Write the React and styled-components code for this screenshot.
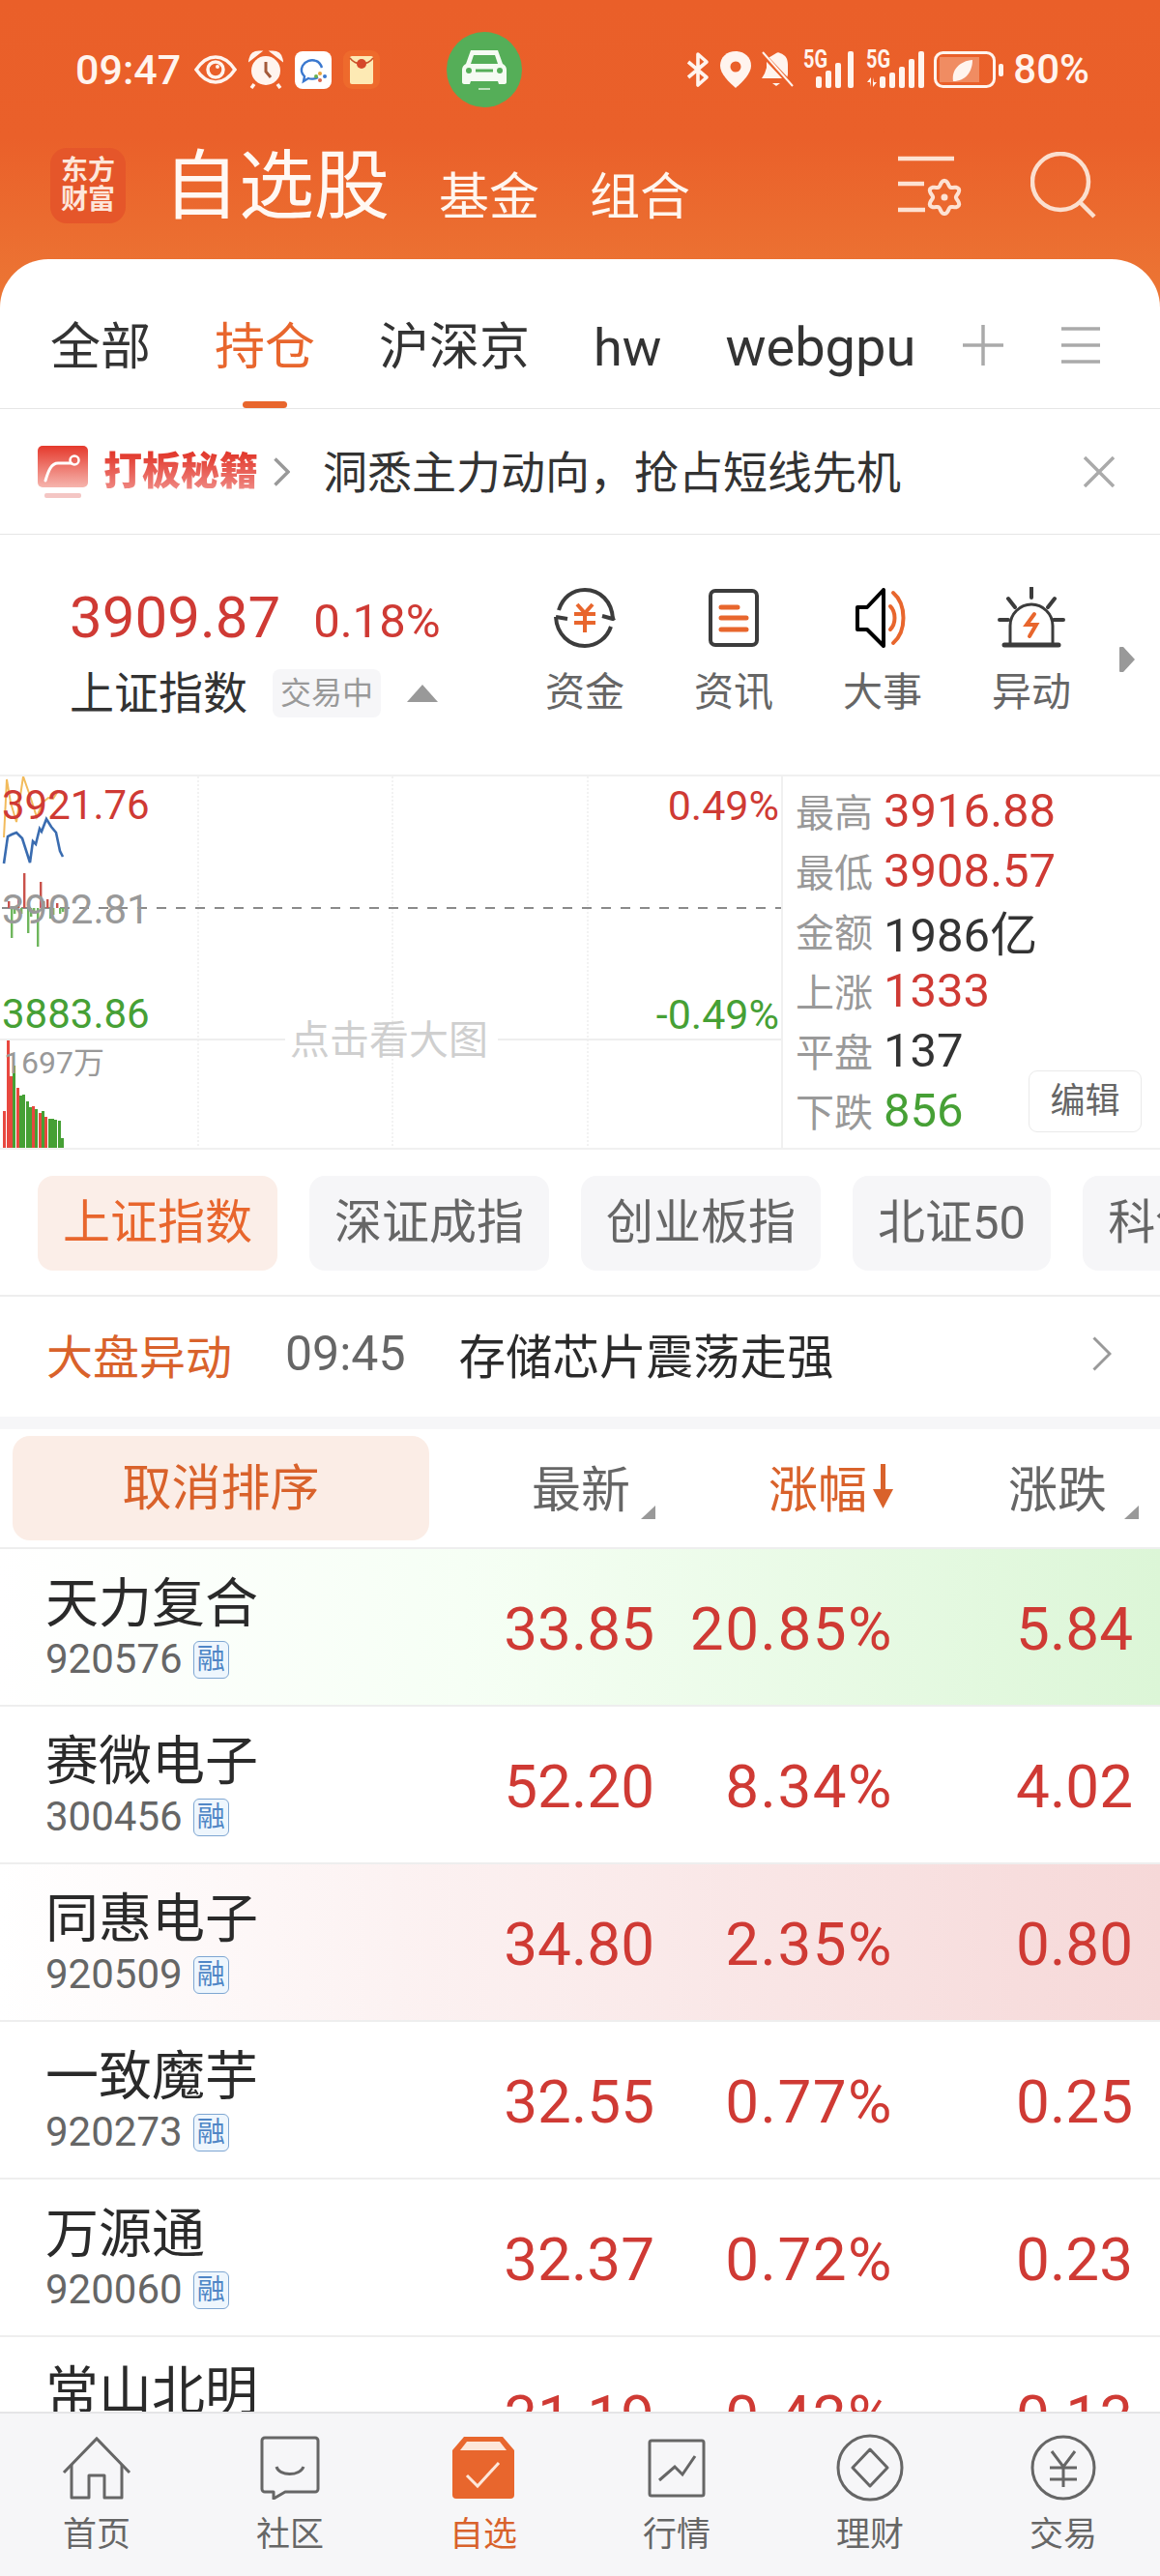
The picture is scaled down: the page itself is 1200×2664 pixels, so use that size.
import React from 'react'
import styled, { createGlobalStyle } from 'styled-components'

const ORANGE = '#E8662D'
const RED = '#CF3A34'
const GREEN = '#46A035'
const FONT = '"Roboto", "Noto Sans CJK SC", sans-serif'

const GlobalStyle = createGlobalStyle`
  html, body { margin: 0; padding: 0; background: #fff; }
  body { font-family: ${FONT}; }
  * { box-sizing: border-box; }
`

const Page = styled.div`
  width: 1200px;
  height: 2664px;
  display: flex;
  flex-direction: column;
  overflow: hidden;
  background: #fff;
`

/* header */
const Header = styled.header`
  flex: none;
  height: 318px;
  padding-top: 32px;
  background: linear-gradient(180deg, #ea5f29 0%, #ea602a 45%, #ec7735 100%);
  color: #fff;
`
const StatusBar = styled.div`
  height: 80px;
  display: flex;
  align-items: center;
  padding: 0 73px 0 78px;
`
const StatusLeft = styled.div`
  width: 384px;
  display: flex;
  align-items: center;
  gap: 12px;
`
const Time = styled.span`
  font-size: 43px;
  font-weight: 500;
  line-height: 1;
  margin-right: 2px;
  color: #fff4ee;
`
const CarBadge = styled.div`
  width: 78px;
  height: 78px;
  border-radius: 50%;
  background: #55ae58;
  display: flex;
  align-items: center;
  justify-content: center;
  margin-right: auto;
`
const StatusRight = styled.div`
  display: flex;
  align-items: center;
  gap: 10px;
`
const Battery = styled.span`
  font-size: 42px;
  font-weight: 500;
  line-height: 1;
  color: #fff4ee;
`
const TitleRow = styled.div`
  height: 80px;
  margin-top: 40px;
  padding: 0 64px 0 52px;
  display: flex;
  align-items: center;
`
const Logo = styled.div`
  width: 78px;
  height: 78px;
  border-radius: 17px;
  background: #e5562a;
  color: #fde6da;
  font-size: 28px;
  font-weight: 700;
  line-height: 30px;
  text-align: center;
  padding-top: 9px;
`
const Title = styled.h1`
  margin: 0 0 0 39px;
  padding-top: 3px;
  font-size: 78px;
  font-weight: 400;
  line-height: 1;
  letter-spacing: 0;
  color: #fff8f3;
`
const SubTitle = styled.span`
  font-size: 52px;
  line-height: 1;
  margin-left: ${(p) => p.$gap}px;
  padding-top: 26px;
  color: #fff6ef;
`
const HeaderIcons = styled.div`
  margin-left: auto;
  display: flex;
  align-items: center;
  gap: 68px;
`

/* white sheet */
const Sheet = styled.div`
  flex: 1;
  min-height: 0;
  margin-top: -50px;
  background: #fff;
  border-radius: 50px 50px 0 0;
  display: flex;
  flex-direction: column;
`
const TabsBar = styled.div`
  flex: none;
  height: 155px;
  display: flex;
  align-items: center;
  border-bottom: 1px solid #e6e6e6;
  padding-left: 52px;
`
const TabsScroll = styled.div`
  width: 896px;
  display: flex;
  gap: 66px;
  overflow: hidden;
`
const Tab = styled.div`
  position: relative;
  flex: none;
  height: 155px;
  line-height: 183px;
  font-size: ${(p) => p.$size || 52}px;
  color: ${(p) => (p.$active ? ORANGE : '#333')};
  ${(p) =>
    p.$active &&
    `&::after {
      content: '';
      position: absolute;
      left: 29px;
      bottom: 1px;
      width: 46px;
      height: 7px;
      border-radius: 4px;
      background: ${ORANGE};
    }`}
`
const TabTools = styled.div`
  display: flex;
  align-items: center;
  gap: 60px;
  margin-left: 48px;
  padding-top: 24px;
`
const Banner = styled.div`
  flex: none;
  height: 130px;
  display: flex;
  align-items: center;
  padding-left: 39px;
  border-bottom: 1px solid #e6e6e6;
`
const BannerName = styled.span`
  margin-left: 16px;
  font-size: 40px;
  font-weight: 900;
  line-height: 46px;
  background: linear-gradient(180deg, #e23a2e 10%, #f08d88 95%);
  -webkit-background-clip: text;
  background-clip: text;
  color: transparent;
`
const BannerChevron = styled.span`
  display: flex;
  margin-left: 16px;
`
const BannerText = styled.span`
  margin: 0 0 6px 34px;
  font-size: 46px;
  color: #333;
`
const CloseButton = styled.span`
  margin-left: auto;
  margin-right: 47px;
  display: flex;
`

/* index summary */
const IndexRow = styled.section`
  flex: none;
  height: 248px;
  display: flex;
  padding-top: 54px;
`
const IndexInfo = styled.div`
  flex: none;
  width: 528px;
  padding: 0 0 0 72px;
`
const PriceLine = styled.div`
  display: flex;
  align-items: baseline;
  gap: 34px;
  color: ${RED};
  height: 62px;
  line-height: 64px;
`
const Price = styled.span`
  font-size: 60px;
`
const Percent = styled.span`
  font-size: 49px;
`
const NameLine = styled.div`
  display: flex;
  align-items: center;
  margin-top: 20px;
`
const IndexName = styled.span`
  font-size: 46px;
  line-height: 56px;
  color: #333;
`
const StateTag = styled.span`
  margin-left: 26px;
  width: 112px;
  height: 50px;
  border-radius: 8px;
  background: #f6f6f8;
  color: #999;
  font-size: 32px;
  line-height: 50px;
  text-align: center;
`
const TriangleUp = styled.span`
  margin-left: 27px;
  width: 0;
  height: 0;
  border-left: 16px solid transparent;
  border-right: 16px solid transparent;
  border-bottom: 18px solid #999;
`
const IndexLink = styled.div`
  flex: none;
  width: 154px;
  display: flex;
  flex-direction: column;
  align-items: center;
  color: #666;
  font-size: 41px;
`
const LinkIconSlot = styled.div`
  height: 64px;
  display: flex;
  align-items: center;
  justify-content: center;
`
const IndexLinkLabel = styled.span`
  margin-top: 19px;
  line-height: 52px;
`
const MoreArrow = styled.span`
  margin: 62px 0 0 14px;
  display: flex;
`

/* chart */
const ChartRow = styled.section`
  flex: none;
  height: 388px;
  display: flex;
  border-top: 2px solid #f0f0f0;
  border-bottom: 2px solid #f0f0f0;
`
const ChartArea = styled.div`
  position: relative;
  flex: none;
  width: 810px;
  height: 384px;
  border-right: 2px solid #f0f0f0;
`
const ChartSvg = styled.svg`
  position: absolute;
  left: 0;
  top: 0;
`
const ChartLabel = styled.span`
  position: absolute;
  font-size: ${(p) => p.$size || 42}px;
  line-height: 1;
  color: ${(p) => p.$color};
  top: ${(p) => p.$top}px;
  ${(p) => (p.$right !== undefined ? `right: ${p.$right}px;` : `left: ${p.$left}px;`)}
`
const ChartHint = styled.span`
  position: absolute;
  left: 300px;
  top: 252px;
  font-size: 41px;
  line-height: 42px;
  color: #cfcfcf;
`
const StatsPanel = styled.div`
  position: relative;
  flex: 1;
  padding: 4px 0 0 13px;
`
const StatRow = styled.div`
  height: 62px;
  display: flex;
  align-items: center;
  gap: 11px;
`
const StatLabel = styled.span`
  font-size: 40px;
  color: #999;
`
const StatValue = styled.span`
  font-size: 49px;
  color: ${(p) => p.$color || '#333'};
`
const EditButton = styled.span`
  position: absolute;
  right: 19px;
  bottom: 16px;
  width: 117px;
  height: 64px;
  border: 1px solid #eaeaea;
  border-radius: 9px;
  font-size: 36px;
  line-height: 62px;
  text-align: center;
  color: #666;
  background: #fff;
`

/* index switcher */
const IndexTabs = styled.div`
  flex: none;
  height: 152px;
  padding: 27px 0 0 39px;
  display: flex;
  gap: 33px;
  overflow: hidden;
  border-bottom: 2px solid #eee;
`
const IndexTab = styled.div`
  flex: none;
  height: 98px;
  padding: 0 26px;
  border-radius: 16px;
  font-size: 49px;
  line-height: 98px;
  background: ${(p) => (p.$active ? '#fbeee8' : '#f6f6f8')};
  color: ${(p) => (p.$active ? ORANGE : '#666')};
`

/* market alert */
const AlertRow = styled.div`
  flex: none;
  height: 137px;
  display: flex;
  align-items: center;
  padding: 0 50px 6px 48px;
  border-bottom: 13px solid #f6f6f8;
`
const AlertTag = styled.span`
  font-size: 48px;
  color: #d9622b;
`
const AlertTime = styled.span`
  margin-left: 55px;
  font-size: 50px;
  color: #666;
`
const AlertText = styled.span`
  margin-left: 55px;
  font-size: 48.5px;
  color: #2a2a2a;
`
const AlertArrow = styled.span`
  margin-left: auto;
  display: flex;
`

/* list */
const SortRow = styled.div`
  flex: none;
  height: 124px;
  display: grid;
  grid-template-columns: 444px 234px 247px 253px;
  align-items: center;
  border-bottom: 2px solid #eee;
`
const CancelSort = styled.div`
  margin-left: 13px;
  width: 431px;
  height: 108px;
  border-radius: 18px;
  background: #fbede6;
  color: #d9622b;
  font-size: 51px;
  line-height: 110px;
  text-align: center;
`
const SortHead = styled.div`
  position: relative;
  height: 60px;
  display: flex;
  justify-content: flex-end;
  align-items: center;
  gap: ${(p) => (p.$active ? 5 : 0)}px;
  padding-right: ${(p) => p.$pad}px;
  padding-bottom: 5px;
  font-size: 51px;
  color: ${(p) => (p.$active ? '#d9622b' : '#666')};
`
const SortCorner = styled.span`
  position: absolute;
  right: 0;
  bottom: -2px;
  width: 0;
  height: 0;
  border-left: 15px solid transparent;
  border-bottom: 14px solid #999;
`
const StockList = styled.div`
  flex: 1;
  min-height: 0;
  overflow: hidden;
`
const StockItem = styled.div`
  height: 163px;
  display: grid;
  grid-template-columns: 440px 237px 247px 248px;
  align-items: center;
  border-bottom: 2px solid #eee;
  background: ${(p) =>
    p.$tint === 'green'
      ? 'linear-gradient(90deg, #fff 0%, #f6fff5 40%, #dcf6d7 100%)'
      : p.$tint === 'red'
      ? 'linear-gradient(90deg, #fff 0%, #fbeeee 45%, #f6d8d8 100%)'
      : '#fff'};
`
const StockName = styled.div`
  padding: 2px 0 0 47px;
  align-self: start;
`
const NameText = styled.div`
  font-size: 55px;
  line-height: 58px;
  margin-top: 25px;
  color: #2a2a2a;
`
const CodeLine = styled.div`
  display: flex;
  align-items: center;
  gap: 11px;
  margin-top: 7px;
`
const CodeText = styled.span`
  font-size: 42px;
  line-height: 44px;
  color: #666;
`
const MarginTag = styled.span`
  width: 37px;
  height: 39px;
  border: 1px solid #7ea6d2;
  border-radius: 6px;
  background: #eef6fd;
  color: #4f86c6;
  font-size: 29px;
  line-height: 36px;
  text-align: center;
`
const StockValue = styled.div`
  padding-top: 4px;
  font-size: 62px;
  line-height: 1;
  letter-spacing: ${(p) => (p.$wide ? 1.5 : 0)}px;
  text-align: right;
  color: ${RED};
`

/* bottom nav */
const BottomNav = styled.nav`
  flex: none;
  height: 170px;
  display: grid;
  grid-template-columns: repeat(6, 200px);
  background: #f6f6f8;
  border-top: 2px solid #e5e5e7;
`
const NavItem = styled.div`
  display: flex;
  flex-direction: column;
  align-items: center;
  padding-top: 21px;
  font-size: 35px;
  line-height: 40px;
  color: ${(p) => (p.$active ? '#d9622b' : '#666')};
`
const NavIconSlot = styled.div`
  height: 70px;
  display: flex;
  align-items: center;
  justify-content: center;
`
const NavLabel = styled.span`
  margin-top: 15px;
`

/* drawings */
const EyeIcon = () => (
  <svg width="44" height="30" viewBox="0 0 44 30" fill="none">
    <path d="M2 15C8 6 15 2 22 2s14 4 20 13c-6 9-13 13-20 13S8 24 2 15z" stroke="#fff4ee" strokeWidth="3.5" />
    <circle cx="22" cy="15" r="8" stroke="#fff4ee" strokeWidth="3.5" />
    <circle cx="24" cy="12" r="2" fill="#fff4ee" />
  </svg>
)
const AlarmIcon = () => (
  <svg width="36" height="40" viewBox="0 0 36 40">
    <circle cx="18" cy="21" r="15" fill="#fff4ee" />
    <path d="M2 9c1-5 5-7 9-7L2 9zM34 9c-1-5-5-7-9-7l9 7z" stroke="#fff4ee" strokeWidth="3" />
    <path d="M6 35l-3 4M30 35l3 4" stroke="#fff4ee" strokeWidth="3.5" />
    <path d="M18 12v10l5 6" stroke="#a45a3a" strokeWidth="3" fill="none" />
  </svg>
)
const ChatAppIcon = () => (
  <svg width="38" height="39" viewBox="0 0 38 39">
    <rect width="38" height="39" rx="8" fill="#fff" />
    <path d="M24 27c-3 2-8 2-10 1l-5 3 1-5c-3-3-4-7-2-11 3-5 9-7 14-5 3 1 5 4 6 7" fill="none" stroke="#3a78cf" strokeWidth="2.4" />
    <circle cx="26" cy="23" r="2" fill="#e8a33a" />
    <circle cx="31" cy="26" r="2" fill="#3a78cf" />
    <circle cx="26" cy="30" r="2" fill="#d9634a" />
    <circle cx="22" cy="26" r="2" fill="#6bb04f" />
  </svg>
)
const PacketIcon = () => (
  <svg width="38" height="40" viewBox="0 0 38 40">
    <rect width="38" height="40" rx="9" fill="#ee6a2c" />
    <rect x="7" y="6" width="24" height="29" rx="2" fill="#fdeab4" />
    <path d="M7 8c6 8 18 8 24 0" fill="none" stroke="#c9542a" strokeWidth="1.5" />
    <circle cx="19" cy="14" r="5" fill="#d6482a" />
  </svg>
)
const CarIcon = () => (
  <svg width="46" height="46" viewBox="0 0 46 46">
    <path d="M9 3h28l5 14c2 1 4 3 4 6v13c0 1-1 2-2 2h-6l-1-3H9l-1 3H2c-1 0-2-1-2-2V23c0-3 2-5 4-6L9 3z" fill="#f5fbf3" />
    <path d="M12 8h22l3 9H9l3-9z" fill="#55ae58" />
    <circle cx="7" cy="24" r="3" fill="#55ae58" />
    <circle cx="39" cy="24" r="3" fill="#55ae58" />
    <rect x="14" y="22.5" width="18" height="3" fill="#55ae58" />
    <path d="M17 43h12" stroke="#dff0dc" strokeWidth="1.5" />
  </svg>
)
const BluetoothIcon = () => (
  <svg width="26" height="38" viewBox="0 0 26 38" fill="none">
    <path d="M3 11l19 16-9 8V3l9 8L3 27" stroke="#fff4ee" strokeWidth="3.6" strokeLinejoin="round" />
  </svg>
)
const PinIcon = () => (
  <svg width="32" height="38" viewBox="0 0 32 38">
    <path d="M16 0c9 0 16 6 16 15 0 8-9 17-16 23C9 32 0 23 0 15 0 6 7 0 16 0z" fill="#fff4ee" />
    <circle cx="16" cy="16" r="5.5" fill="#ea602a" />
  </svg>
)
const MuteIcon = () => (
  <svg width="34" height="38" viewBox="0 0 34 38" fill="none">
    <path d="M16 2c1-1 3-1 4 0 6 2 8 6 8 12v10l-1 4H1l3-5 2-6V8z" fill="#fff4ee" />
    <path d="M12 33h8l-4 3z" fill="#fff4ee" />
    <path d="M1 2l32 34" stroke="#ea602a" strokeWidth="5" />
    <path d="M2 1l31 35" stroke="#fff4ee" strokeWidth="2" />
  </svg>
)
const signalBars = {
  plain: [[13, 26], [23, 20], [33, 12], [46, 0]],
  arrows: [[14, 26], [24, 22], [34, 16], [44, 8], [54, 0]],
}
const SignalIcon = ({ arrows }) => {
  const w = arrows ? 60 : 55
  return (
    <svg width={w} height="50" viewBox={`0 -6 ${w} 50`}>
      <text x="0" y="17" fontSize="25" fontWeight="700" fontFamily="Roboto" fill="#fff4ee" textLength="25" lengthAdjust="spacingAndGlyphs">5G</text>
      {arrows && <path d="M5 37V27l-4 5h3zM7 27v10l4-5H8z" fill="#fff4ee" />}
      {signalBars[arrows ? 'arrows' : 'plain'].map(([x, y]) => (
        <rect key={x} x={x} y={y} width="6" height={38 - y} rx="2" fill="#fff4ee" />
      ))}
    </svg>
  )
}
const BatteryIcon = () => (
  <svg width="72" height="38" viewBox="0 0 72 38">
    <rect x="1.5" y="1.5" width="61" height="35" rx="8" fill="none" stroke="#fff4ee" strokeWidth="3" />
    <path d="M6 6h41v26H6z" fill="#f08c62" />
    <path d="M20 31c-2-12 7-21 20-22 0 12-7 22-20 22z" fill="#fff4ee" />
    <rect x="67" y="13" width="5" height="13" rx="2" fill="#fff4ee" />
  </svg>
)
const gearPath = (cx, cy, r, amp) => {
  const pts = []
  for (let i = 0; i < 72; i++) {
    const t = (i / 72) * Math.PI * 2
    const rr = r + amp * Math.cos(6 * t)
    pts.push(`${(cx + rr * Math.sin(t)).toFixed(1)},${(cy - rr * Math.cos(t)).toFixed(1)}`)
  }
  return `M${pts.join('L')}Z`
}
const SettingIcon = () => (
  <svg width="70" height="62" viewBox="0 0 70 62" fill="none" stroke="#fde2d3" strokeWidth="4.5">
    <path d="M1 3h58M1 29h27M1 56h28" />
    <path d={gearPath(49, 43, 14.5, 2.6)} strokeWidth="4" />
    <circle cx="49" cy="43" r="3.5" fill="#fde2d3" stroke="none" />
  </svg>
)
const SearchIcon = () => (
  <svg width="70" height="70" viewBox="0 0 70 70" fill="none" stroke="#fbdfcf" strokeWidth="4.5">
    <circle cx="31" cy="31" r="29" />
    <path d="M51 52l15 15" />
  </svg>
)
const PlusIcon = () => (
  <svg width="42" height="42" viewBox="0 0 42 42" stroke="#aaa" strokeWidth="3.5">
    <path d="M0 21h42M21 0v42" />
  </svg>
)
const MenuIcon = () => (
  <svg width="40" height="38" viewBox="0 0 40 38" stroke="#aaa" strokeWidth="3.5">
    <path d="M0 2h40M0 19h40M0 36h40" />
  </svg>
)
const BannerIcon = () => (
  <svg width="52" height="54" viewBox="0 0 52 54">
    <defs>
      <linearGradient id="bannerFill" x1="0" y1="0" x2="0" y2="1">
        <stop offset="0" stopColor="#e5392c" />
        <stop offset="1" stopColor="#f6b5ae" />
      </linearGradient>
    </defs>
    <rect width="52" height="43" rx="5" fill="url(#bannerFill)" />
    <rect x="7" y="49" width="38" height="5" rx="2" fill="#f4c6c4" />
    <path d="M8 36c3-10 6-18 13-18h14" fill="none" stroke="#fff" strokeWidth="3" strokeLinecap="round" />
    <circle cx="38" cy="15" r="4.5" fill="none" stroke="#fff" strokeWidth="2.5" />
  </svg>
)
const Chevron = ({ w = 17, h = 30, color = '#999', sw = 3.5 }) => (
  <svg width={w} height={h} viewBox={`0 0 ${w} ${h}`} fill="none" stroke={color} strokeWidth={sw}>
    <path d={`M1.5 1.5L${w - 2} ${h / 2}L1.5 ${h - 1.5}`} />
  </svg>
)
const CloseIcon = () => (
  <svg width="32" height="32" viewBox="0 0 32 32" stroke="#aaa" strokeWidth="3.5">
    <path d="M1 1l30 30M31 1L1 31" />
  </svg>
)
const FundIcon = () => (
  <svg width="64" height="64" viewBox="0 0 64 64" fill="none" stroke="#3c3c3c" strokeWidth="4">
    <path d="M5 24C9 11 19 3 32 3c16 0 28 12 29 30" />
    <path d="M50 30l11 3 2-1" />
    <path d="M59 41c-4 12-15 20-27 20C16 61 3 49 2 31" />
    <path d="M14 33L2 31" />
    <g stroke={ORANGE}>
      <path d="M24 18l8 9 8-9M21 28h22M21 37h22M32 27v20" />
    </g>
  </svg>
)
const NewsIcon = () => (
  <svg width="52" height="60" viewBox="0 0 52 60" fill="none">
    <rect x="2" y="2" width="48" height="56" rx="5" stroke="#3c3c3c" strokeWidth="4" />
    <path d="M13 19h17M13 30h26M13 42h26" stroke={ORANGE} strokeWidth="5" strokeLinecap="round" />
  </svg>
)
const SpeakerIcon = () => (
  <svg width="58" height="62" viewBox="0 0 58 62" fill="none">
    <path d="M30 2v58L13 43H3V20h10L30 2z" stroke="#000" strokeWidth="4" strokeLinejoin="round" />
    <path d="M37 19c6 6 6 18 0 24M40 5c14 12 14 40 0 52" stroke={ORANGE} strokeWidth="4" strokeLinecap="round" />
  </svg>
)
const AlarmLampIcon = () => (
  <svg width="70" height="64" viewBox="0 0 70 64" fill="none" stroke="#3c3c3c" strokeWidth="4" strokeLinecap="round">
    <path d="M35 1v10M11 12l7 9M59 12l-7 9M2 34h9M58 34h10" />
    <path d="M13 59V40c0-12 10-22 22-22s22 10 22 22v19" strokeWidth="3" />
    <path d="M7 60h56" strokeWidth="5" />
    <path d="M38 28l-8 11h10l-7 12" stroke={ORANGE} strokeWidth="4" />
  </svg>
)
const ArrowRightSolid = () => (
  <svg width="16" height="26" viewBox="0 0 16 26">
    <path d="M1 0h3l12 13L4 26H1a1 1 0 0 1-1-1V1a1 1 0 0 1 1-1z" fill="#999" />
  </svg>
)
const SortArrow = () => (
  <svg width="23" height="46" viewBox="0 0 23 46" fill="#d9622b">
    <path d="M9 0h5v28H9z" />
    <path d="M1 26h21L11.5 46z" />
  </svg>
)
const HomeIcon = () => (
  <svg width="72" height="66" viewBox="0 0 72 66" fill="none" stroke="#666" strokeWidth="3">
    <path d="M2 38L36 3l34 35" />
    <path d="M10 30v34h18V41h16v23h18V30" strokeLinejoin="round" />
  </svg>
)
const ChatIcon = () => (
  <svg width="62" height="66" viewBox="0 0 62 66" fill="none" stroke="#666" strokeWidth="3">
    <path d="M5 2h52a3 3 0 0 1 3 3v50a3 3 0 0 1-3 3H26L14 65v-7H5a3 3 0 0 1-3-3V5a3 3 0 0 1 3-3z" strokeLinejoin="round" />
    <path d="M17 32c3 10 24 10 28 0" />
  </svg>
)
const WatchIcon = () => (
  <svg width="64" height="66" viewBox="0 0 64 66">
    <path d="M12 1h40l12 14v46a4 4 0 0 1-4 4H4a4 4 0 0 1-4-4V15L12 1z" fill={ORANGE} />
    <path d="M15 6h34l7 9H8z" fill="#fde7da" />
    <path d="M15 41l11 11 22-24" fill="none" stroke="#fde7da" strokeWidth="3" />
  </svg>
)
const TrendIcon = () => (
  <svg width="60" height="62" viewBox="0 0 60 62" fill="none" stroke="#666" strokeWidth="3">
    <rect x="2" y="3" width="56" height="57" rx="2" />
    <path d="M12 44l16-14 8 8 13-19" />
  </svg>
)
const WealthIcon = () => (
  <svg width="72" height="70" viewBox="0 0 72 70" fill="none" stroke="#666" strokeWidth="3">
    <ellipse cx="36" cy="35" rx="33" ry="33" />
    <path d="M36 16l18 19-18 19-18-19z" strokeLinejoin="round" />
  </svg>
)
const TradeIcon = () => (
  <svg width="68" height="68" viewBox="0 0 68 68" fill="none" stroke="#666" strokeWidth="3">
    <circle cx="34" cy="34" r="32" />
    <path d="M22 17l12 16 12-16M20 34h28M20 46h28M34 33v21" />
  </svg>
)

/* chart data in page coordinates */
const yellowLine = '4,866 7,806 11,830 17,850 24,803 30,820 38,845 44,830 50,825 55,826 60,818 65,820'
const blueLine = '4,893 8,865 12,863 17,861 23,867 31,892 34,870 37,873 41,857 43,860 48,847 53,855 58,861 62,880 65,886'
const macdBars = [
  [8, 932], [11, 970], [14, 945], [18, 930], [21, 945], [24, 903], [28, 965], [31, 948], [34, 945],
  [38, 979], [41, 912], [44, 932], [48, 930], [51, 950], [54, 946], [58, 934], [61, 945], [64, 943],
]
const volumeBars = [
  [3, 1149, 'r'], [7, 1076, 'r'], [10, 1113, 'r'], [13, 1102, 'g'], [17, 1125, 'r'], [20, 1133, 'g'],
  [23, 1132, 'g'], [27, 1139, 'g'], [30, 1145, 'g'], [33, 1144, 'r'], [36, 1147, 'g'], [40, 1151, 'r'],
  [43, 1149, 'g'], [46, 1155, 'r'], [50, 1157, 'g'], [53, 1157, 'g'], [56, 1158, 'g'], [60, 1159, 'g'],
  [63, 1177, 'g'],
]

const MiniChart = () => (
  <ChartSvg width="808" height="384" viewBox="0 803 808 384">
    {[205, 406, 608].map((x) => (
      <path key={x} d={`M${x} 803V1187`} stroke="#eee" strokeWidth="1.5" strokeDasharray="2 2" />
    ))}
    <path d="M0 1075H295M515 1075H808" stroke="#eee" strokeWidth="2" />
    <path d="M2 939H808" stroke="#8a8a8a" strokeWidth="2" strokeDasharray="10 10" />
    <polyline points={yellowLine} fill="none" stroke="#f2bb5c" strokeWidth="2" />
    <polyline points={blueLine} fill="none" stroke="#3a6cb0" strokeWidth="2.6" />
    {macdBars.map(([x, y]) => (
      <rect key={x} x={x} y={Math.min(y, 939)} width="2.4" height={Math.abs(939 - y)} fill={y < 939 ? '#c9524b' : '#6fb65d'} />
    ))}
    {volumeBars.map(([x, y, c]) => (
      <rect key={x} x={x} y={y} width="3" height={1187 - y} fill={c === 'r' ? '#e8483f' : '#46a035'} />
    ))}
  </ChartSvg>
)

const indexLinks = [
  { label: '资金', Icon: FundIcon },
  { label: '资讯', Icon: NewsIcon },
  { label: '大事', Icon: SpeakerIcon },
  { label: '异动', Icon: AlarmLampIcon },
]

const stats = [
  { label: '最高', value: '3916.88', color: RED },
  { label: '最低', value: '3908.57', color: RED },
  { label: '金额', value: '1986亿' },
  { label: '上涨', value: '1333', color: RED },
  { label: '平盘', value: '137' },
  { label: '下跌', value: '856', color: GREEN },
]

const stocks = [
  { name: '天力复合', code: '920576', price: '33.85', pct: '20.85%', chg: '5.84', tint: 'green' },
  { name: '赛微电子', code: '300456', price: '52.20', pct: '8.34%', chg: '4.02' },
  { name: '同惠电子', code: '920509', price: '34.80', pct: '2.35%', chg: '0.80', tint: 'red' },
  { name: '一致魔芋', code: '920273', price: '32.55', pct: '0.77%', chg: '0.25' },
  { name: '万源通', code: '920060', price: '32.37', pct: '0.72%', chg: '0.23' },
  { name: '常山北明', code: '000158', price: '31.19', pct: '0.42%', chg: '0.13' },
]

const navItems = [
  { label: '首页', Icon: HomeIcon },
  { label: '社区', Icon: ChatIcon },
  { label: '自选', Icon: WatchIcon, active: true },
  { label: '行情', Icon: TrendIcon },
  { label: '理财', Icon: WealthIcon },
  { label: '交易', Icon: TradeIcon },
]

export default function App() {
  return (
    <Page>
      <GlobalStyle />
      <Header>
        <StatusBar>
          <StatusLeft>
            <Time>09:47</Time>
            <EyeIcon />
            <AlarmIcon />
            <ChatAppIcon />
            <PacketIcon />
          </StatusLeft>
          <CarBadge><CarIcon /></CarBadge>
          <StatusRight>
            <BluetoothIcon />
            <PinIcon />
            <MuteIcon />
            <SignalIcon />
            <SignalIcon arrows />
            <BatteryIcon />
            <Battery>80%</Battery>
          </StatusRight>
        </StatusBar>
        <TitleRow>
          <Logo>东方<br />财富</Logo>
          <Title>自选股</Title>
          <SubTitle $gap={51}>基金</SubTitle>
          <SubTitle $gap={52}>组合</SubTitle>
          <HeaderIcons>
            <SettingIcon />
            <SearchIcon />
          </HeaderIcons>
        </TitleRow>
      </Header>

      <Sheet>
        <TabsBar>
          <TabsScroll>
            <Tab>全部</Tab>
            <Tab $active>持仓</Tab>
            <Tab>沪深京</Tab>
            <Tab $size={54}>hw</Tab>
            <Tab $size={56}>webgpu</Tab>
          </TabsScroll>
          <TabTools>
            <PlusIcon />
            <MenuIcon />
          </TabTools>
        </TabsBar>

        <Banner>
          <BannerIcon />
          <BannerName>打板秘籍</BannerName>
          <BannerChevron><Chevron /></BannerChevron>
          <BannerText>洞悉主力动向，抢占短线先机</BannerText>
          <CloseButton><CloseIcon /></CloseButton>
        </Banner>

        <IndexRow>
          <IndexInfo>
            <PriceLine>
              <Price>3909.87</Price>
              <Percent>0.18%</Percent>
            </PriceLine>
            <NameLine>
              <IndexName>上证指数</IndexName>
              <StateTag>交易中</StateTag>
              <TriangleUp />
            </NameLine>
          </IndexInfo>
          {indexLinks.map(({ label, Icon }) => (
            <IndexLink key={label}>
              <LinkIconSlot><Icon /></LinkIconSlot>
              <IndexLinkLabel>{label}</IndexLinkLabel>
            </IndexLink>
          ))}
          <MoreArrow><ArrowRightSolid /></MoreArrow>
        </IndexRow>

        <ChartRow>
          <ChartArea>
            <MiniChart />
            <ChartLabel $left={2} $top={9} $color={RED}>3921.76</ChartLabel>
            <ChartLabel $left={2} $top={117} $color="#999">3902.81</ChartLabel>
            <ChartLabel $left={2} $top={225} $color={GREEN}>3883.86</ChartLabel>
            <ChartLabel $left={4} $top={280} $size={32} $color="#999">1697万</ChartLabel>
            <ChartLabel $right={2} $top={9} $size={43} $color={RED}>0.49%</ChartLabel>
            <ChartLabel $right={2} $top={225} $size={43} $color={GREEN}>-0.49%</ChartLabel>
            <ChartHint>点击看大图</ChartHint>
          </ChartArea>
          <StatsPanel>
            {stats.map((s) => (
              <StatRow key={s.label}>
                <StatLabel>{s.label}</StatLabel>
                <StatValue $color={s.color}>{s.value}</StatValue>
              </StatRow>
            ))}
            <EditButton>编辑</EditButton>
          </StatsPanel>
        </ChartRow>

        <IndexTabs>
          <IndexTab $active>上证指数</IndexTab>
          <IndexTab>深证成指</IndexTab>
          <IndexTab>创业板指</IndexTab>
          <IndexTab>北证50</IndexTab>
          <IndexTab>科创50</IndexTab>
        </IndexTabs>

        <AlertRow>
          <AlertTag>大盘异动</AlertTag>
          <AlertTime>09:45</AlertTime>
          <AlertText>存储芯片震荡走强</AlertText>
          <AlertArrow><Chevron w={20} h={36} sw={3} /></AlertArrow>
        </AlertRow>

        <SortRow>
          <CancelSort>取消排序</CancelSort>
          <SortHead $pad={26}>最新<SortCorner /></SortHead>
          <SortHead $pad={0} $active>涨幅<SortArrow /></SortHead>
          <SortHead $pad={33}>涨跌<SortCorner /></SortHead>
        </SortRow>

        <StockList>
          {stocks.map((s) => (
            <StockItem key={s.code} $tint={s.tint}>
              <StockName>
                <NameText>{s.name}</NameText>
                <CodeLine>
                  <CodeText>{s.code}</CodeText>
                  <MarginTag>融</MarginTag>
                </CodeLine>
              </StockName>
              <StockValue>{s.price}</StockValue>
              <StockValue $wide>{s.pct}</StockValue>
              <StockValue>{s.chg}</StockValue>
            </StockItem>
          ))}
        </StockList>

        <BottomNav>
          {navItems.map(({ label, Icon, active }) => (
            <NavItem key={label} $active={active}>
              <NavIconSlot><Icon /></NavIconSlot>
              <NavLabel>{label}</NavLabel>
            </NavItem>
          ))}
        </BottomNav>
      </Sheet>
    </Page>
  )
}
